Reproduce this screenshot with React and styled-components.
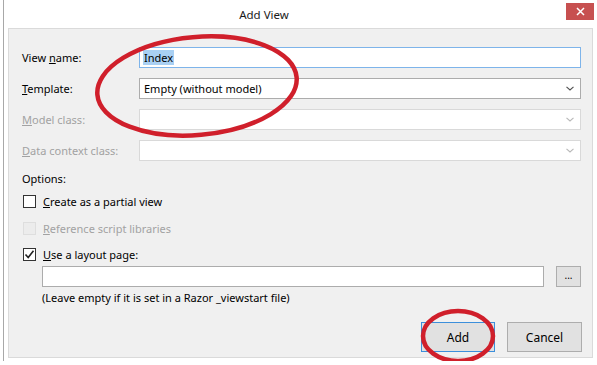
import styled, { createGlobalStyle } from "styled-components";

const GlobalStyle = createGlobalStyle`
  html, body {
    margin: 0;
    padding: 0;
    background: #ffffff;
  }
  body {
    font-family: "Noto Sans", "Open Sans", sans-serif;
    font-size: 11px;
    color: #000;
  }
`;

function Chevron({ disabled }) {
  return (
    <svg width="8" height="5" viewBox="0 0 8 5">
      <path
        d="M0.5 0.8 L4 4 L7.5 0.8"
        fill="none"
        stroke={disabled ? "#b8b8b8" : "#505050"}
        strokeWidth="1.1"
      />
    </svg>
  );
}

function Check() {
  return (
    <svg width="11" height="11" viewBox="0 0 11 11">
      <path d="M1.5 5.5 L4.2 8.5 L9.5 1.8" fill="none" stroke="#222" strokeWidth="1.6" />
    </svg>
  );
}

export default function App() {
  return (
    <>
      <GlobalStyle />
      <Window>
        <TitleBar>
          <Title>Add View</Title>
          <CloseButton>
            <svg width="9" height="9" viewBox="0 0 9 9">
              <path d="M1 1 L8 8 M8 1 L1 8" stroke="#fff" strokeWidth="1.5" />
            </svg>
          </CloseButton>
        </TitleBar>
        <Panel>
          <Fields>
            <FieldRow>
              <Label>
                View <u>n</u>ame:
              </Label>
              <TextInput $focused>
                <Selected>Index</Selected>
              </TextInput>
            </FieldRow>
            <FieldRow>
              <Label>
                <u>T</u>emplate:
              </Label>
              <Select>
                <span>Empty (without model)</span>
                <Chevron />
              </Select>
            </FieldRow>
            <FieldRow>
              <Label $disabled>
                <u>M</u>odel class:
              </Label>
              <Select $disabled>
                <span />
                <Chevron disabled />
              </Select>
            </FieldRow>
            <FieldRow>
              <Label $disabled>
                <u>D</u>ata context class:
              </Label>
              <Select $disabled>
                <span />
                <Chevron disabled />
              </Select>
            </FieldRow>
          </Fields>

          <Options>
            <SectionLabel>Options:</SectionLabel>
            <CheckRow $top={6}>
              <CheckBox />
              <span>
                <u>C</u>reate as a partial view
              </span>
            </CheckRow>
            <CheckRow $top={11} $disabled>
              <CheckBox $disabled />
              <span>
                <u>R</u>eference script libraries
              </span>
            </CheckRow>
            <CheckRow $top={10}>
              <CheckBox>
                <Check />
              </CheckBox>
              <span>
                <u>U</u>se a layout page:
              </span>
            </CheckRow>
            <LayoutRow>
              <LayoutInput />
              <BrowseButton>...</BrowseButton>
            </LayoutRow>
            <Hint>(Leave empty if it is set in a Razor _viewstart file)</Hint>
          </Options>

          <Footer>
            <Button $focused>Add</Button>
            <Button>Cancel</Button>
          </Footer>
        </Panel>
        <Marks width="597" height="365" viewBox="0 0 597 365">
          <ellipse
            cx="197"
            cy="86"
            rx="100"
            ry="49"
            transform="rotate(-5 197 86)"
            fill="none"
            stroke="#d01f2b"
            strokeWidth="4.5"
          />
          <ellipse
            cx="458"
            cy="336"
            rx="35"
            ry="25"
            fill="none"
            stroke="#d01f2b"
            strokeWidth="4.5"
          />
        </Marks>
      </Window>
    </>
  );
}

const Window = styled.div`
  position: relative;
  width: 594px;
  height: 361px;
  margin-left: 3px;
  border-left: 1px solid #a8a8a8;
  background: #ffffff;
`;

const TitleBar = styled.div`
  height: 28px;
  display: flex;
  align-items: flex-start;
  justify-content: center;
  padding-right: 74px;
  box-sizing: border-box;
`;

const Title = styled.div`
  padding-top: 7px;
  font-size: 11.5px;
  color: #1a1a1a;
`;

const CloseButton = styled.div`
  position: absolute;
  top: 3px;
  right: 4px;
  width: 28px;
  height: 17px;
  background: #c75050;
  display: flex;
  align-items: center;
  justify-content: center;
`;

const Panel = styled.div`
  margin-left: 4px;
  width: 585px;
  height: 330px;
  box-sizing: border-box;
  border: 1px solid #dadada;
  background: #f0f0f0;
  padding: 18px 10px 0 13px;
  display: flex;
  flex-direction: column;
`;

const Fields = styled.div`
  display: flex;
  flex-direction: column;
  gap: 10px;
`;

const FieldRow = styled.div`
  display: grid;
  grid-template-columns: 117px 442px;
  align-items: center;
  height: 21px;
`;

const Label = styled.div`
  color: ${(p) => (p.$disabled ? "#a2a2a2" : "#000")};
  white-space: nowrap;
`;

const TextInput = styled.div`
  height: 21px;
  box-sizing: border-box;
  border: 1px solid ${(p) => (p.$focused ? "#7eb4ea" : "#acacac")};
  background: #fff;
  display: flex;
  align-items: center;
  padding-left: 3px;
`;

const Selected = styled.span`
  background: #a9d0f3;
  padding: 0 1px;
  line-height: 15px;
`;

const Select = styled.div`
  height: 21px;
  box-sizing: border-box;
  border: 1px solid ${(p) => (p.$disabled ? "#d9d9d9" : "#acacac")};
  background: #fff;
  display: flex;
  align-items: center;
  justify-content: space-between;
  padding: 0 6px 0 4px;
`;

const Options = styled.div`
  display: flex;
  flex-direction: column;
  margin-top: 10px;
`;

const SectionLabel = styled.div`
  line-height: 16px;
`;

const CheckRow = styled.div`
  display: flex;
  align-items: center;
  gap: 7px;
  height: 16px;
  margin-top: ${(p) => p.$top}px;
  color: ${(p) => (p.$disabled ? "#a2a2a2" : "#000")};
`;

const CheckBox = styled.div`
  width: 13px;
  height: 13px;
  box-sizing: border-box;
  margin-left: 1px;
  border: 1px solid ${(p) => (p.$disabled ? "#dedede" : "#333")};
  background: ${(p) => (p.$disabled ? "#ececec" : "#fff")};
  display: flex;
  align-items: center;
  justify-content: center;
`;

const LayoutRow = styled.div`
  display: flex;
  gap: 12px;
  margin-top: 4px;
  padding-left: 20px;
`;

const LayoutInput = styled.div`
  width: 502px;
  height: 21px;
  box-sizing: border-box;
  border: 1px solid #acacac;
  background: #fff;
`;

const BrowseButton = styled.div`
  width: 25px;
  height: 21px;
  box-sizing: border-box;
  border: 1px solid #adadad;
  background: #e1e1e1;
  display: flex;
  align-items: center;
  justify-content: center;
  font-size: 10px;
  padding-bottom: 3px;
`;

const Hint = styled.div`
  margin-top: 3px;
  padding-left: 20px;
  line-height: 16px;
`;

const Footer = styled.div`
  display: flex;
  justify-content: flex-end;
  gap: 12px;
  margin-top: 16px;
`;

const Button = styled.div`
  width: ${(p) => (p.$focused ? "74px" : "75px")};
  height: 30px;
  box-sizing: border-box;
  border: 1px solid ${(p) => (p.$focused ? "#3c8fdb" : "#adadad")};
  background: #e1e1e1;
  display: flex;
  align-items: center;
  justify-content: center;
  font-size: 12px;
`;

const Marks = styled.svg`
  position: absolute;
  left: -4px;
  top: 0;
  pointer-events: none;
`;
